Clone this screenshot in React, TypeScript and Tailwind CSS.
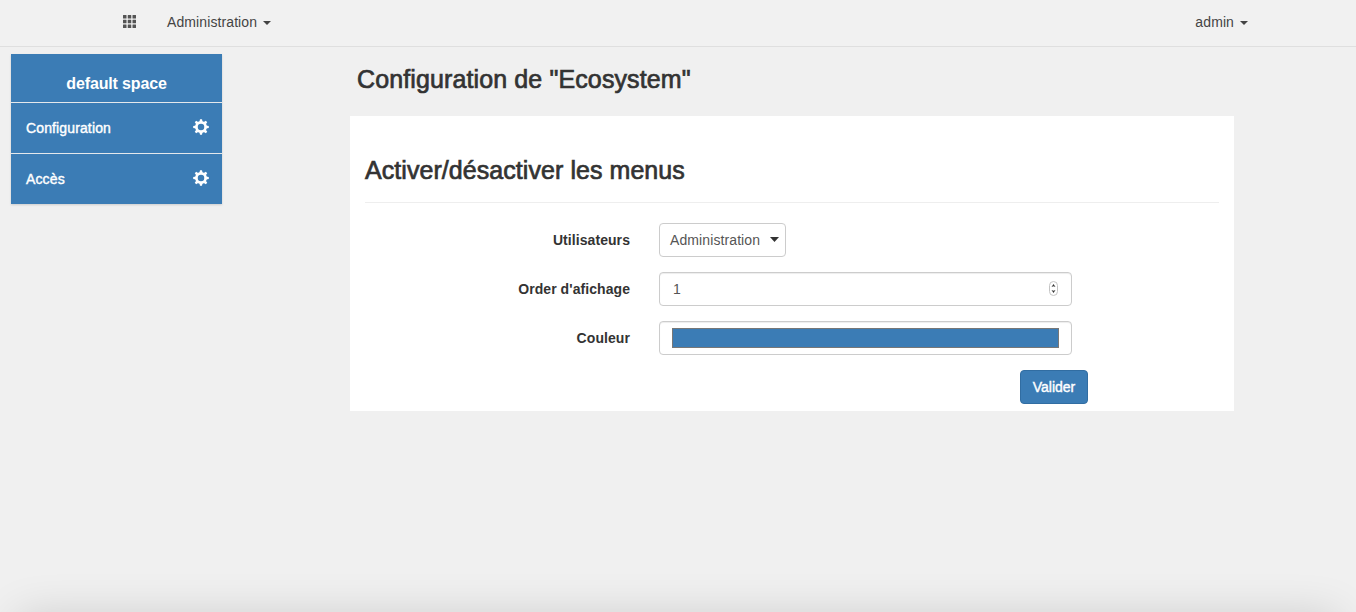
import type { ReactNode } from "react";

function Caret({ className = "" }: { className?: string }) {
  return (
    <svg className={className} width="8" height="4" viewBox="0 0 8 4" fill="currentColor">
      <path d="M0 0h8L4 4z" />
    </svg>
  );
}

function GridIcon() {
  return (
    <svg width="13" height="13" viewBox="0 0 13 13" fill="#555">
      {[0, 4.75, 9.5].map((y) =>
        [0, 4.75, 9.5].map((x) => <rect key={`${x}-${y}`} x={x} y={y} width="3.5" height="3.5" rx="0.3" />),
      )}
    </svg>
  );
}

function Gear() {
  return (
    <svg className="mb-[2px]" width="16" height="16" viewBox="0 0 16 16" fill="none" stroke="#fff">
      <circle cx="8" cy="8" r="4.6" strokeWidth="2.7" />
      {[0, 45, 90, 135, 180, 225, 270, 315].map((a) => (
        <path key={a} d="M6.4 3L7 0.2H9L9.6 3z" fill="#fff" stroke="none" transform={`rotate(${a} 8 8)`} />
      ))}
    </svg>
  );
}

function MenuItem({ label }: { label: string }) {
  return (
    <a className="flex h-[51px] items-center justify-between border-t border-[#e4e8ec] pr-[13px] pl-[15px] text-white">
      <span className="text-sm tracking-[0.13px] [-webkit-text-stroke:0.4px_#fff]">{label}</span>
      <Gear />
    </a>
  );
}

function Field({ label, children }: { label: string; children: ReactNode }) {
  return (
    <div className="flex h-[34px] items-center gap-[29px]">
      <label className="w-[265px] text-right text-sm font-bold tracking-[0.07px]">{label}</label>
      {children}
    </div>
  );
}

const control = "flex h-[34px] items-center rounded border border-[#ccc] bg-white text-sm text-[#555]";

export default function App() {
  return (
    <div className="relative h-[612px] w-full overflow-hidden bg-[#f0f0f0] font-['Liberation_Sans',Arial,sans-serif] text-[#333]">
      <header className="flex h-[47px] items-center border-b border-[#dfdfdf] bg-[#f1f1f1] pr-[108px] pb-[3px] pl-[123px] text-sm tracking-[0.1px] text-[#444]">
        <GridIcon />
        <a className="ml-[31px] flex items-center">
          <span>Administration</span>
          <Caret className="mt-[3px] ml-1.5" />
        </a>
        <a className="ml-auto flex items-center">
          <span>admin</span>
          <Caret className="mt-[3px] ml-1.5" />
        </a>
      </header>
      <div className="flex items-start pl-[11px]">
        <nav className="mt-[7px] w-[211px] bg-[#3b7cb5] shadow-[0_1px_2px_rgba(0,0,0,0.15)]">
          <h2 className="h-12 pt-[19px] text-center text-base leading-[22px] font-bold tracking-[-0.15px] text-white">
            default space
          </h2>
          <MenuItem label="Configuration" />
          <MenuItem label="Accès" />
        </nav>
        <main className="ml-32 w-[884px]">
          <h1 className="h-[69px] pt-[18px] pl-[7px] text-[25px] leading-[28px] tracking-[0.12px] [-webkit-text-stroke:0.7px_#333]">
            Configuration de "Ecosystem"
          </h1>
          <section className="h-[295px] bg-white px-[15px]">
            <h2 className="h-[87px] border-b border-[#eee] pt-[40px] text-[25px] leading-[28px] tracking-[0.06px] [-webkit-text-stroke:0.7px_#333]">
              Activer/désactiver les menus
            </h2>
            <form className="flex flex-col gap-[15px] pt-5">
              <Field label="Utilisateurs">
                <div className={`${control} w-[127px] justify-between pr-[6px] pl-[10px]`}>
                  <span className="tracking-[0.1px]">Administration</span>
                  <svg className="mb-0.5" width="9" height="5" viewBox="0 0 9 5" fill="#333">
                    <path d="M0 0h9L4.5 5z" />
                  </svg>
                </div>
              </Field>
              <Field label="Order d'afichage">
                <div className={`${control} w-[413px] justify-between pr-[13px] pl-[13px] shadow-[inset_0_1px_1px_rgba(0,0,0,0.075)]`}>
                  <span>1</span>
                  <svg className="mb-px" width="9" height="15" viewBox="0 0 9 15" fill="none">
                    <rect x="0.5" y="0.5" width="8" height="14" rx="4" fill="#fff" stroke="#c4c4c4" />
                    <path d="M2.5 6L4.5 3L6.5 6L4.5 5.2zM2.5 9L4.5 12L6.5 9L4.5 9.8z" fill="#333" />
                  </svg>
                </div>
              </Field>
              <Field label="Couleur">
                <div className={`${control} w-[413px] px-3 shadow-[inset_0_1px_1px_rgba(0,0,0,0.075)]`}>
                  <div className="h-5 w-[387px] border border-[#777] bg-[#3b7cb5]" />
                </div>
              </Field>
              <button
                type="button"
                className="ml-[655px] h-[34px] w-[68px] rounded border border-[#316da2] bg-[#3b7cb5] text-sm text-white [-webkit-text-stroke:0.4px_#fff]"
              >
                Valider
              </button>
            </form>
          </section>
        </main>
      </div>
      <div className="absolute inset-x-[18px] top-[617px] h-20 shadow-[0_0_46px_rgba(0,0,0,0.16)]" />
    </div>
  );
}
